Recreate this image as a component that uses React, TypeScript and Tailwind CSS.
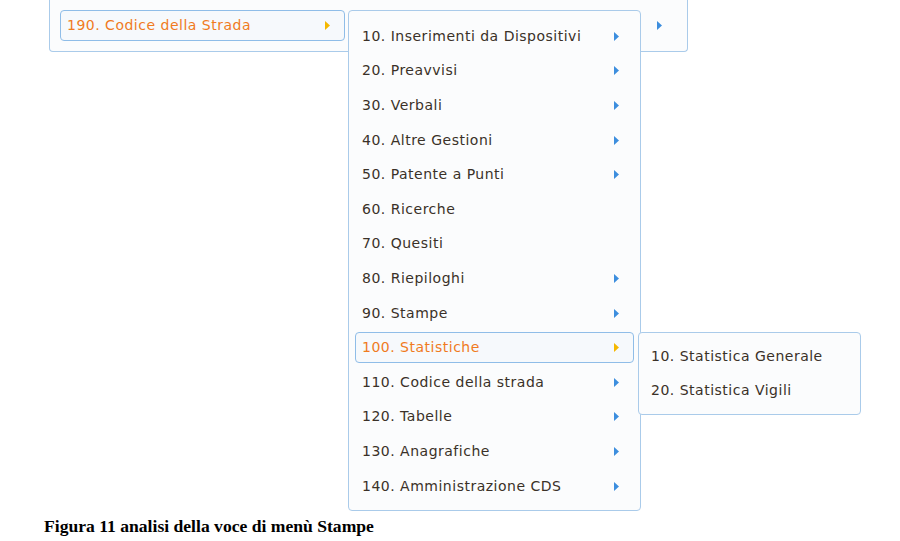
import React from "react";

const items = [
  { label: "10. Inserimenti da Dispositivi", sub: true },
  { label: "20. Preavvisi", sub: true },
  { label: "30. Verbali", sub: true },
  { label: "40. Altre Gestioni", sub: true },
  { label: "50. Patente a Punti", sub: true },
  { label: "60. Ricerche", sub: false },
  { label: "70. Quesiti", sub: false },
  { label: "80. Riepiloghi", sub: true },
  { label: "90. Stampe", sub: true },
  { label: "100. Statistiche", sub: true, active: true },
  { label: "110. Codice della strada", sub: true },
  { label: "120. Tabelle", sub: true },
  { label: "130. Anagrafiche", sub: true },
  { label: "140. Amministrazione CDS", sub: true },
];

function Arrow({ active }: { active?: boolean }) {
  return (
    <svg width="5" height="9" viewBox="0 0 5 9" className="shrink-0">
      <path d="M0 0 L5 4.5 L0 9 Z" fill={active ? "#f5b800" : "#3d8ede"} />
    </svg>
  );
}

export default function App() {
  return (
    <div className="relative w-[900px] h-[541px] bg-white overflow-hidden font-['DejaVu_Sans',sans-serif] text-[14px] tracking-[0.5px] text-[#3a3128]">
      {/* top level menu, cut off at the top */}
      <div className="ml-[49px] w-[639px] h-[52px] bg-[#fbfcfd] border border-t-0 border-[#aacbea] rounded-b-[4px] flex items-start pt-[10px] pl-[10px]">
        <div className="w-[285px] h-[31px] border border-[#8fbde8] rounded-[4px] bg-[#f6f9fc] flex items-center justify-between pl-[6px] pr-[14px]">
          <span className="text-[#f07b1e]">190. Codice della Strada</span>
          <Arrow active />
        </div>
        <div className="ml-auto mr-[25px] mt-[11px]">
          <Arrow />
        </div>
      </div>

      {/* second level */}
      <div className="absolute left-[348px] top-[10px] w-[293px] h-[501px] bg-[#fbfcfd] border border-[#aacbea] rounded-[4px] py-[8px] px-[6px]">
        {items.map((it) => (
          <div key={it.label} className="h-[34.6px] flex items-center">
            <div
              className={`w-full h-[31px] flex items-center justify-between pl-[6px] pr-[14px] rounded-[4px] border ${
                it.active ? "border-[#8fbde8] bg-[#f6f9fc]" : "border-transparent"
              }`}
            >
              <span className={it.active ? "text-[#f07b1e]" : ""}>{it.label}</span>
              {it.sub && <Arrow active={it.active} />}
            </div>
          </div>
        ))}
      </div>

      {/* third level */}
      <div className="absolute left-[638px] top-[332px] w-[223px] h-[83px] bg-[#fbfcfd] border border-[#aacbea] rounded-[4px] pt-[6px] pl-[12px]">
        <div className="h-[34.6px] flex items-center">10. Statistica Generale</div>
        <div className="h-[34.6px] flex items-center">20. Statistica Vigili</div>
      </div>

      <div className="absolute left-[44px] top-[515px] font-['Liberation_Serif',serif] font-bold text-[17.6px] leading-[22px] tracking-normal text-black">
        Figura 11 analisi della voce di menù Stampe
      </div>
    </div>
  );
}
